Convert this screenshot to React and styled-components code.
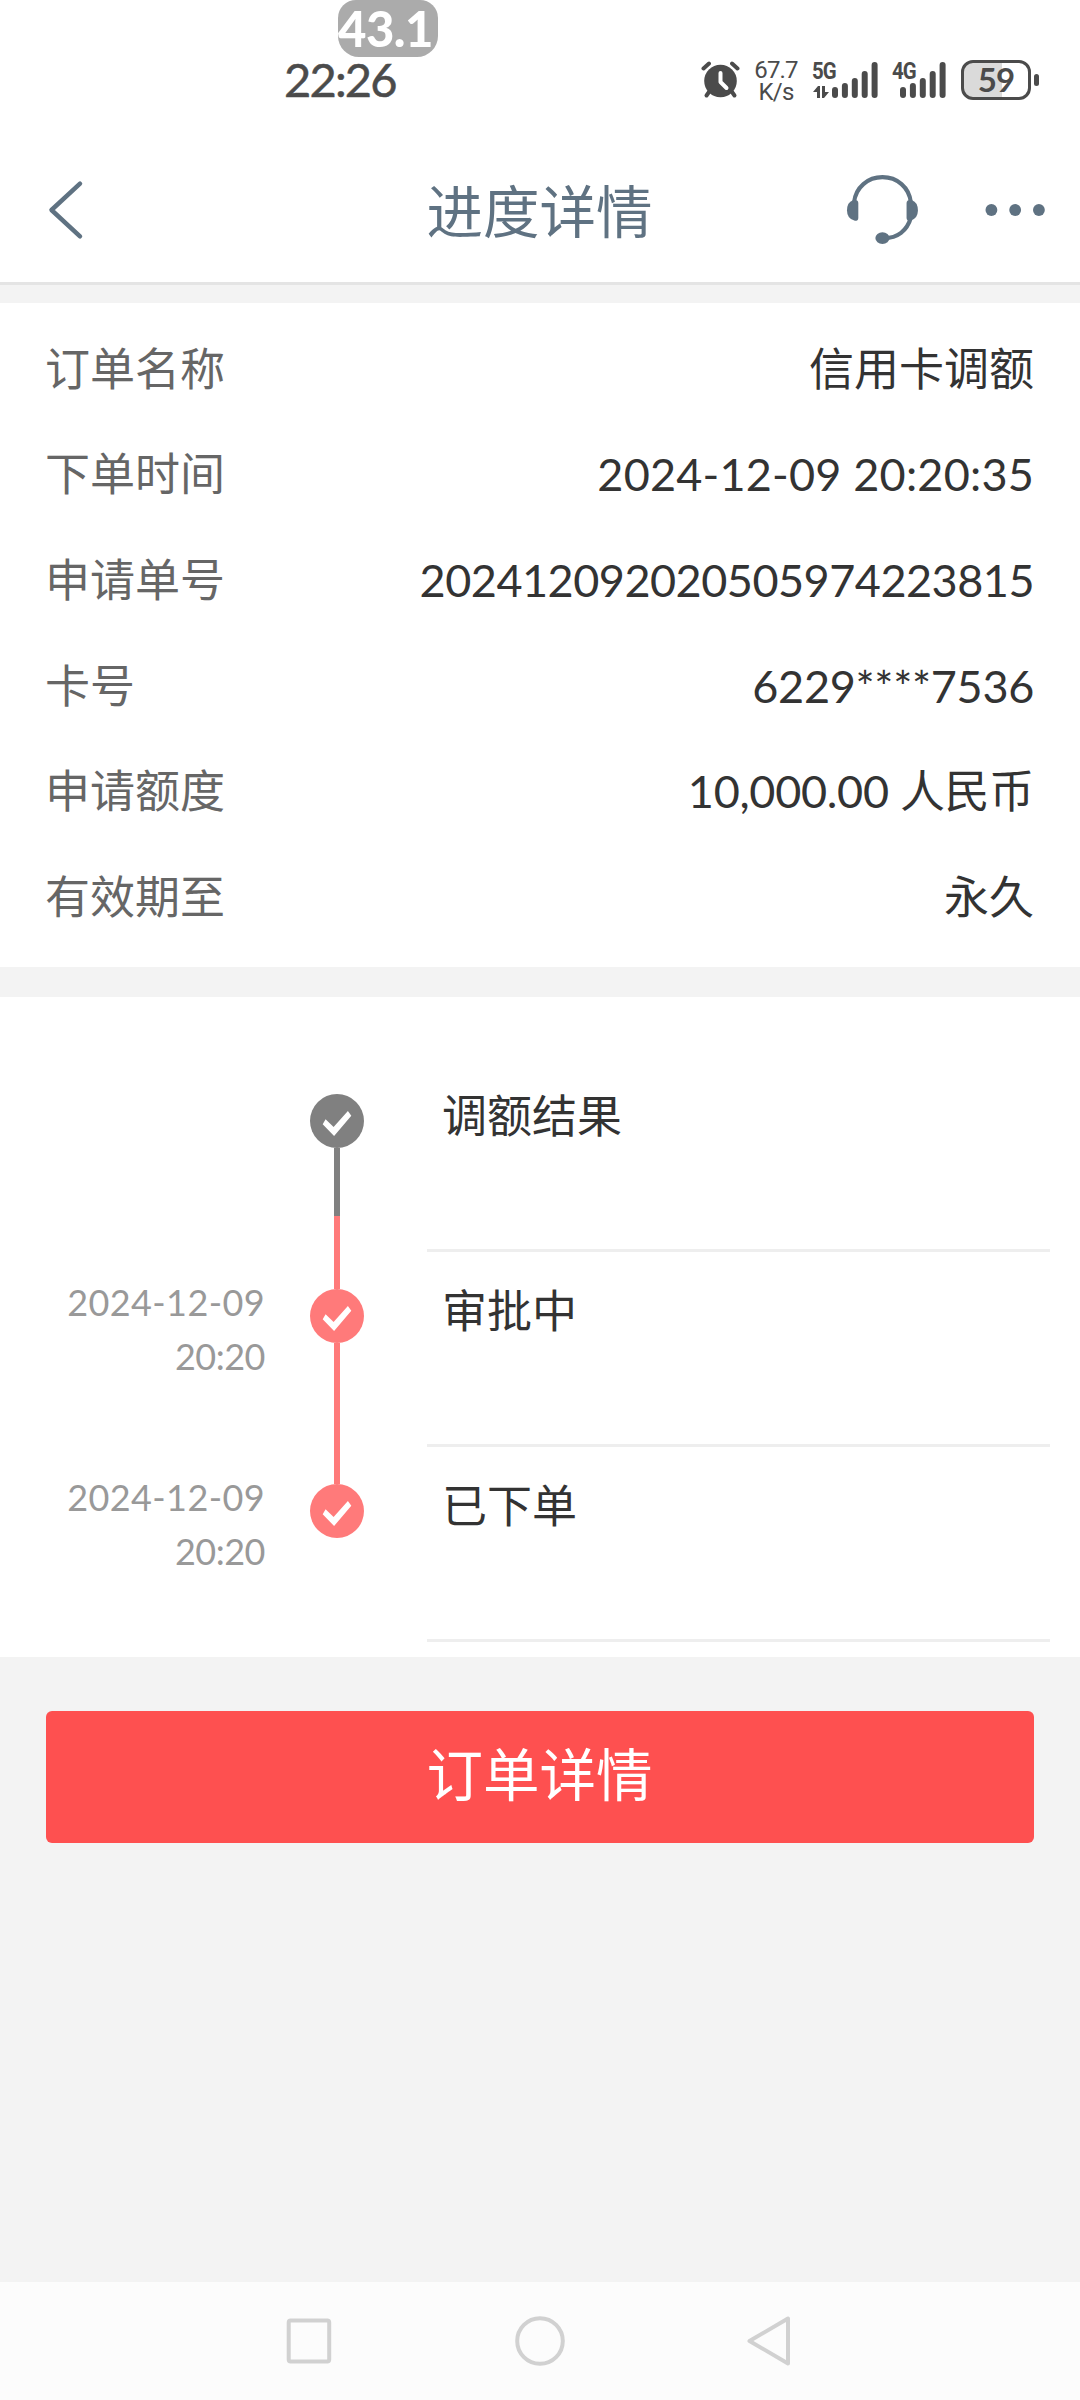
import styled, { createGlobalStyle } from "styled-components"

const GlobalStyle = createGlobalStyle`
    * {
        box-sizing: border-box;
    }
    body {
        margin: 0;
        background: #f3f3f3;
        font-family: Lato, "Noto Sans CJK SC", sans-serif;
    }
    svg {
        display: block;
    }
`

const Page = styled.div`
    width: 1080px;
    height: 2400px;
    display: flex;
    flex-direction: column;
    overflow: hidden;
`

const StatusBar = styled.div`
    position: relative;
    height: 138px;
    padding: 60px 41px 0 284px;
    display: flex;
    align-items: flex-start;
    justify-content: space-between;
    background: white;
    color: #4b4b4b;
`

const FpsBadge = styled.div`
    position: absolute;
    top: 0;
    left: 338px;
    width: 100px;
    height: 57px;
    border-radius: 18px 18px 21px 21px;
    background: #ababab;
    color: white;
    font-size: 49px;
    font-weight: 900;
    line-height: 56px;
    letter-spacing: -0.5px;
    white-space: nowrap;
`

const Clock = styled.div`
    font-size: 47px;
    line-height: 39px;
    letter-spacing: -1.8px;
    -webkit-text-stroke: 0.5px #4b4b4b;
`

const StatusIcons = styled.div`
    display: flex;
    align-items: flex-start;
`

const NetSpeed = styled.div`
    width: 58px;
    margin: -1px 3px 0 6px;
    text-align: center;
    font-family: Roboto, sans-serif;
    font-size: 24px;
    line-height: 22px;
    letter-spacing: -0.8px;
    white-space: pre-line;
`

const Signal = styled.div`
    position: relative;
    width: ${({ $width }) => $width}px;
    height: 40px;
    margin-left: ${({ $gap }) => $gap}px;
`

const SignalName = styled.span`
    position: absolute;
    top: 0;
    left: 0;
    font-family: Roboto, sans-serif;
    font-size: 24px;
    font-weight: 700;
    line-height: 22px;
    letter-spacing: -1px;
    transform: scaleX(0.85);
    transform-origin: left;
`

const DataArrows = styled.svg`
    position: absolute;
    top: 26px;
    left: 1px;
`

const Battery = styled.div`
    width: 70px;
    height: 40px;
    margin-left: 15px;
    border: 3px solid #4b4b4b;
    border-radius: 12px;
    background: linear-gradient(to right, #dadada 59%, white 59%);
    font-size: 33px;
    font-weight: 700;
    line-height: 33px;
    letter-spacing: -1px;
    text-align: center;
`

const BatteryTip = styled.div`
    width: 5px;
    height: 12px;
    margin: 14px 0 0 3px;
    border-radius: 3px;
    background: #4b4b4b;
`

const Header = styled.header`
    height: 147px;
    padding: 0 34px 0 45px;
    display: grid;
    grid-template-columns: 188px 1fr 200px;
    align-items: center;
    background: white;
    border-bottom: 3px solid #e4e4e4;
    color: #5f7282;
`

const Title = styled.h1`
    margin: 0;
    padding-top: 2px;
    font-size: 56.5px;
    font-weight: 400;
    line-height: 80px;
    text-align: center;
`

const HeaderActions = styled.div`
    display: flex;
    align-items: center;
    justify-content: flex-end;
    gap: 66px;
`

const Details = styled.section`
    height: 664px;
    margin-top: 18px;
    padding: 13px 46px 0 45px;
    background: white;
`

const DetailRow = styled.div`
    height: 105.6px;
    display: flex;
    align-items: center;
    justify-content: space-between;
    font-size: 45px;
    line-height: 60px;
`

const DetailLabel = styled.span`
    color: #666;
`

const DetailValue = styled.span`
    color: #333;
    letter-spacing: ${({ $spacing }) => $spacing || 0}px;
`

const Timeline = styled.section`
    height: 660px;
    margin-top: 30px;
    padding: 60px 30px 0 0;
    background: white;
`

const Step = styled.div`
    height: 195px;
    display: grid;
    grid-template-columns: 265px 144px 18px 1fr;
`

const StepTime = styled.div`
    padding-top: 23px;
    color: #999;
    font-size: 36px;
    line-height: 54px;
    text-align: right;
`

const StepDate = styled.div`
    letter-spacing: 0.4px;
`

const StepHour = styled.div`
    letter-spacing: -0.5px;
`

const StepTrack = styled.div`
    display: flex;
    flex-direction: column;
    align-items: center;
`

const TrackLine = styled.div`
    width: 6px;
    height: ${({ $height }) => $height}px;
    background: ${({ $color }) => $color};
`

const StepDot = styled.div`
    width: 54px;
    height: 54px;
    border-radius: 50%;
    background: ${({ $color }) => $color};
`

const StepLabel = styled.div`
    padding: 29px 0 0 15px;
    grid-column: 4;
    border-bottom: 3px solid #eee;
    color: #333;
    font-size: 45px;
    line-height: 60px;
`

const OrderButton = styled.button`
    height: 132px;
    margin: 54px 46px 0;
    padding: 0 1px 6px 0;
    border: none;
    border-radius: 6px;
    background: #fe5050;
    color: white;
    font-family: inherit;
    font-size: 56.5px;
    line-height: 80px;
`

const NavBar = styled.nav`
    height: 118px;
    margin-top: auto;
    padding: 0 285px;
    display: flex;
    align-items: center;
    justify-content: space-between;
    background: #fcfcfc;
`

const GRAY = "#808080"
const RED = "#ff7a7a"

const details = [
    { label: "订单名称", value: "信用卡调额" },
    { label: "下单时间", value: "2024-12-09 20:20:35", spacing: 0.2 },
    { label: "申请单号", value: "202412092020505974223815", spacing: -0.5 },
    { label: "卡号", value: "6229****7536", spacing: -0.3 },
    { label: "申请额度", value: "10,000.00 人民币", spacing: -0.3 },
    { label: "有效期至", value: "永久" },
]

const steps = [
    { label: "调额结果", color: GRAY, above: "transparent", below: [[68, GRAY], [36, RED]] },
    { label: "审批中", date: "2024-12-09", time: "20:20", color: RED, above: RED, below: [[104, RED]] },
    { label: "已下单", date: "2024-12-09", time: "20:20", color: RED, above: RED, below: [] },
]

const AlarmIcon = () => (
    <svg width="40" height="40" viewBox="0 0 40 40" fill="none" stroke="#4b4b4b" strokeLinecap="round">
        <circle cx="19.5" cy="21" r="16.3" fill="#4b4b4b" stroke="none" />
        <path d="M2.5 8.5L8 3.5M36.5 8.5L31 3.5" strokeWidth="4" />
        <path d="M8 32L5.5 35.5M31 32L33.5 35.5" strokeWidth="4" />
        <path d="M19.5 13V22L25.5 28" stroke="white" strokeWidth="4" strokeLinejoin="round" />
    </svg>
)

const SignalBars = ({ x }) => (
    <svg width="70" height="40" viewBox="0 0 70 40" fill="#4b4b4b">
        {[27, 23, 18, 11, 2].map((y, i) => (
            <rect key={y} x={x + i * 9.9} y={y} width="6" height={38 - y} rx="3" />
        ))}
    </svg>
)

const BackIcon = () => (
    <svg width="40" height="60" viewBox="0 0 40 60" fill="none" stroke="#5f7282" strokeWidth="4.5" strokeLinecap="round" strokeLinejoin="round">
        <path d="M35 3.7L6.5 30L35 56.3" />
    </svg>
)

const HeadsetIcon = () => (
    <svg width="74" height="72" viewBox="0 0 74 72" fill="#5f7282">
        <path d="M8.2 28C10 13 22 2.7 37 2.7S64 13 65.8 28M65.8 44C62 57 52 64.5 39 64.5" fill="none" stroke="#5f7282" strokeWidth="4.2" />
        <path d="M12.5 29V44Q12.5 47 9 47Q1 45 1 36.5Q1 28 7 26Q12.5 25 12.5 29Z" />
        <path d="M61.5 29V44Q61.5 47 65 47Q73 45 73 36.5Q73 28 67 26Q61.5 25 61.5 29Z" />
        <ellipse cx="37" cy="64.5" rx="7.2" ry="6" />
    </svg>
)

const MoreIcon = () => (
    <svg width="62" height="12" viewBox="0 0 62 12" fill="#5f7282">
        <circle cx="6.5" cy="6" r="6" />
        <circle cx="30.6" cy="6" r="6" />
        <circle cx="54.7" cy="6" r="6" />
    </svg>
)

const CheckIcon = () => (
    <svg width="54" height="54" viewBox="0 0 54 54">
        <path d="M12.7 30.3L15.6 25.3L23.6 33L37.9 17L41.3 21.7L24.1 42Z" fill="white" />
    </svg>
)

const App = () => {
    return (
        <>
            <GlobalStyle />
            <Page>
                <StatusBar>
                    <FpsBadge>43.1</FpsBadge>
                    <Clock>22:26</Clock>
                    <StatusIcons>
                        <AlarmIcon />
                        <NetSpeed>{"67.7\nK/s"}</NetSpeed>
                        <Signal $width={66} $gap={4}>
                            <SignalName>5G</SignalName>
                            <DataArrows width="16" height="12" viewBox="0 0 16 12" fill="#4b4b4b">
                                <path d="M7 0V12H4V6H0L5 0ZM9 12V0H12V6H16L11 12Z" />
                            </DataArrows>
                            <SignalBars x={20} />
                        </Signal>
                        <Signal $width={54} $gap={14}>
                            <SignalName>4G</SignalName>
                            <SignalBars x={8} />
                        </Signal>
                        <Battery>59</Battery>
                        <BatteryTip />
                    </StatusIcons>
                </StatusBar>

                <Header>
                    <BackIcon />
                    <Title>进度详情</Title>
                    <HeaderActions>
                        <HeadsetIcon />
                        <MoreIcon />
                    </HeaderActions>
                </Header>

                <Details>
                    {details.map(({ label, value, spacing }) => (
                        <DetailRow key={label}>
                            <DetailLabel>{label}</DetailLabel>
                            <DetailValue $spacing={spacing}>{value}</DetailValue>
                        </DetailRow>
                    ))}
                </Details>

                <Timeline>
                    {steps.map(({ label, date, time, color, above, below }) => (
                        <Step key={label}>
                            <StepTime>
                                <StepDate>{date}</StepDate>
                                <StepHour>{time}</StepHour>
                            </StepTime>
                            <StepTrack>
                                <TrackLine $height={37} $color={above} />
                                <StepDot $color={color}>
                                    <CheckIcon />
                                </StepDot>
                                {below.map(([height, lineColor]) => (
                                    <TrackLine key={lineColor} $height={height} $color={lineColor} />
                                ))}
                            </StepTrack>
                            <StepLabel>{label}</StepLabel>
                        </Step>
                    ))}
                </Timeline>

                <OrderButton>订单详情</OrderButton>

                <NavBar>
                    <svg width="48" height="52" viewBox="0 0 48 52" fill="none" stroke="#d1d1d1" strokeWidth="4">
                        <rect x="3.7" y="5.5" width="40.5" height="41" rx="2" />
                    </svg>
                    <svg width="52" height="52" viewBox="0 0 52 52" fill="none" stroke="#d1d1d1" strokeWidth="4">
                        <circle cx="26" cy="26" r="22.8" />
                    </svg>
                    <svg width="48" height="52" viewBox="0 0 48 52" fill="none" stroke="#d1d1d1" strokeWidth="4" strokeLinejoin="round">
                        <path d="M2.5 26L41 3.5V48.5Z" />
                    </svg>
                </NavBar>
            </Page>
        </>
    )
}

export default App
